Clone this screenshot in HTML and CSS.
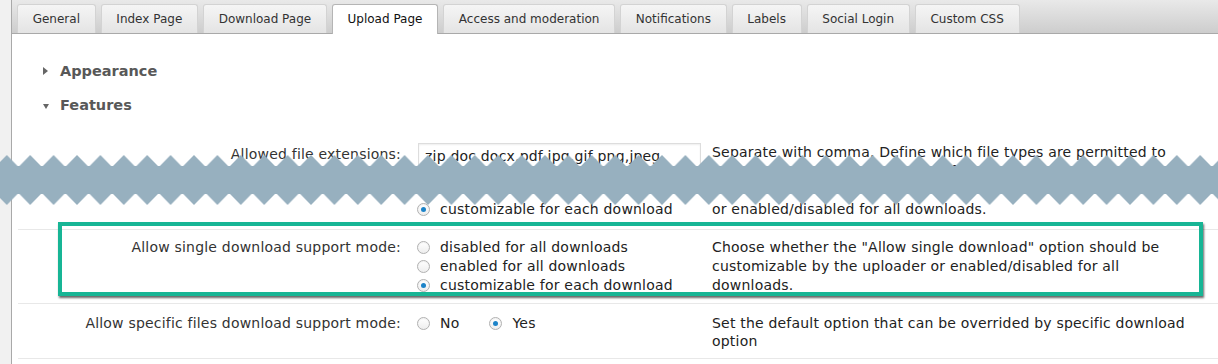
FILE: index.html
```html
<!DOCTYPE html>
<html lang="en">
<head>
    <meta charset="UTF-8">
    <meta name="viewport" content="width=device-width, initial-scale=1.0">
    <title>Upload Page settings</title>
    <link rel="stylesheet" href="styles.css">
</head>
<body>
    <div class="page">
        <div class="gutter"></div>
        <div class="main">
            <ul class="tabs">
                <li>General</li>
                <li>Index Page</li>
                <li>Download Page</li>
                <li class="active">Upload Page</li>
                <li>Access and moderation</li>
                <li>Notifications</li>
                <li>Labels</li>
                <li>Social Login</li>
                <li>Custom CSS</li>
            </ul>
            <div class="panel">
                <h3 class="section closed"><span class="arrow"></span>Appearance</h3>
                <h3 class="section open"><span class="arrow"></span>Features</h3>

                <div class="options">
                    <div class="row first">
                        <div class="label">Allowed file extensions:</div>
                        <div class="field">
                            <input class="text" type="text" value="zip,doc,docx,pdf,jpg,gif,png,jpeg">
                        </div>
                        <div class="desc">Separate with comma. Define which file types are permitted to<br>upload. Leave empty to allow all file types.</div>
                    </div>
                    <div class="row cut">
                        <div class="label"></div>
                        <div class="field">
                            <label class="opt"><span class="radio on"></span>customizable for each download</label>
                        </div>
                        <div class="desc">or enabled/disabled for all downloads.</div>
                    </div>
                    <div class="row">
                        <div class="label">Allow single download support mode:</div>
                        <div class="field">
                            <label class="opt"><span class="radio"></span>disabled for all downloads</label>
                            <label class="opt"><span class="radio"></span>enabled for all downloads</label>
                            <label class="opt"><span class="radio on"></span>customizable for each download</label>
                        </div>
                        <div class="desc">Choose whether the "Allow single download" option should be<br>customizable by the uploader or enabled/disabled for all<br>downloads.</div>
                    </div>
                    <div class="row last">
                        <div class="label">Allow specific files download support mode:</div>
                        <div class="field inline">
                            <label class="opt"><span class="radio"></span>No</label>
                            <label class="opt"><span class="radio on"></span>Yes</label>
                        </div>
                        <div class="desc">Set the default option that can be overrided by specific download<br>option</div>
                    </div>
                </div>
            </div>
        </div>

        <!-- screenshot annotations -->
        <div class="torn">
            <svg width="1218" height="52" viewBox="0 0 1218 52">
                <defs>
                    <pattern id="zig" x="-4.9" y="0" width="23.4" height="52" patternUnits="userSpaceOnUse">
                        <polygon points="0,13 11.7,1 23.4,13 23.4,39 11.7,51 0,39" fill="#97b0bf"/>
                    </pattern>
                </defs>
                <rect x="0" y="12" width="1218" height="28" fill="#97b0bf"/>
                <rect x="0" y="0" width="1218" height="52" fill="url(#zig)"/>
            </svg>
        </div>
        <div class="highlight"></div>
    </div>
</body>
</html>
```

FILE: styles.css
```css
body, html {
    margin: 0;
    padding: 0;
    background-color: #fff;
    font-family: "DejaVu Sans", Verdana, sans-serif;
    font-size: 14px;
    letter-spacing: 0.2px;
    color: #222;
}

.page {
    position: relative;
    display: flex;
    height: 364px;
    overflow: hidden;
}

.gutter {
    flex: 0 0 11px;
    background-color: #f1f1f1;
    border-right: 1px solid #a9a9a9;
}

.main {
    flex: 1;
    min-width: 0;
}

/* tabs */
.tabs {
    display: flex;
    gap: 5px;
    margin: 0;
    padding: 4px 0 0 5px;
    list-style: none;
    height: 29px;
    background: linear-gradient(#e9e9e9, #cdcdcd);
    border-bottom: 1px solid #a9a9a9;
}

.tabs li {
    height: 28px;
    line-height: 28px;
    padding: 0 14.7px;
    font-size: 12px;
    letter-spacing: 0;
    color: #333;
    border: 1px solid #d3d3d3;
    border-bottom: none;
    border-radius: 3px 3px 0 0;
    background: linear-gradient(#f5f5f5, #e4e4e4);
}

.tabs li.active {
    height: 29px;
    color: #111;
    background: #fff;
    border-color: #b5b5b5;
}

/* sections */
.section {
    display: flex;
    align-items: center;
    margin: 0;
    padding-left: 31px;
    height: 20px;
    font-size: 14.5px;
    letter-spacing: 0;
    font-weight: bold;
    color: #585858;
}
.section.closed {
    margin-top: 27px;
}
.section.open {
    margin-top: 14px;
}

.arrow {
    width: 0;
    height: 0;
}
.closed .arrow {
    margin-right: 12px;
    border-top: 4px solid transparent;
    border-bottom: 4px solid transparent;
    border-left: 5px solid #666;
}
.open .arrow {
    margin-top: 2px;
    margin-right: 11px;
    border-left: 3.5px solid transparent;
    border-right: 3.5px solid transparent;
    border-top: 5px solid #666;
}

/* option rows */
.options {
    margin: 19px 0 0 6px;
}

.row {
    display: grid;
    grid-template-columns: 399px 295px 1fr;
    padding: 8px 0 8px;
    border-top: 1px solid #e8e8e8;
    line-height: 19px;
}
.row.first {
    border-top: none;
    padding-top: 9px;
}
.row.cut {
    padding-top: 10px;
    padding-bottom: 10px;
}
.row.last {
    padding-top: 10px;
    border-bottom: 1px solid #e8e8e8;
}
.row.last .desc {
    line-height: 18px;
}

.label {
    text-align: right;
    padding-right: 16px;
    color: #333;
}
.row.first .label {
    padding-top: 2px;
}

.field.inline {
    display: flex;
    align-items: flex-start;
}
.field.inline .opt {
    margin-right: 30px;
}

.desc {
    white-space: nowrap;
    color: #222;
}

.opt {
    display: flex;
    align-items: center;
    color: #222;
}

.radio {
    position: relative;
    box-sizing: border-box;
    flex: 0 0 13px;
    width: 13px;
    height: 13px;
    margin-right: 10px;
    border-radius: 50%;
    border: 1px solid #b1b1b1;
    background: linear-gradient(#fff, #eee);
    box-shadow: inset 0 1px 1px rgba(0, 0, 0, 0.06);
}
.radio.on::after {
    content: "";
    position: absolute;
    left: 3px;
    top: 3px;
    width: 5px;
    height: 5px;
    border-radius: 50%;
    background: #1c83c8;
}

input.text {
    box-sizing: border-box;
    width: 283px;
    height: 26px;
    margin: 0 0 0 1px;
    padding: 0 6px;
    font-family: "DejaVu Sans", Verdana, sans-serif;
    font-size: 14px;
    letter-spacing: 0.2px;
    color: #222;
    border: 1px solid #ddd;
    box-shadow: inset 0 1px 2px rgba(0, 0, 0, 0.07);
}

/* annotations drawn over the screenshot */
.torn {
    position: absolute;
    left: 0;
    top: 154px;
    width: 1218px;
    height: 52px;
    line-height: 0;
}

.highlight {
    position: absolute;
    left: 58px;
    top: 222px;
    width: 1145px;
    height: 74px;
    box-sizing: border-box;
    border: 4px solid #17b595;
    box-shadow: 1px 2px 2px rgba(0, 0, 0, 0.6);
}
```
